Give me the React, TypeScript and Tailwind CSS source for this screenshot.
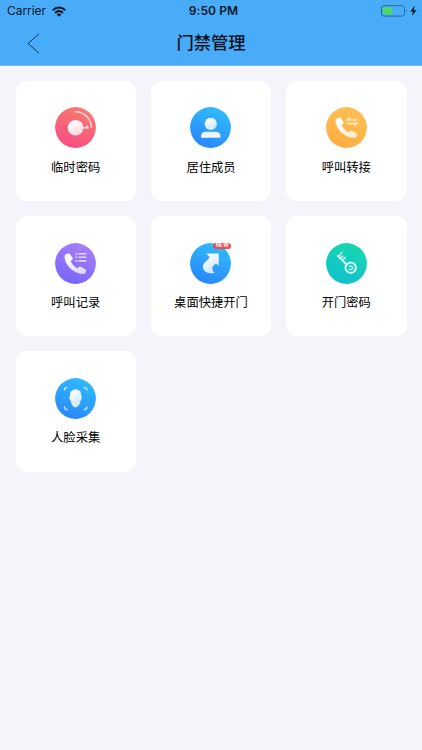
import type { ReactNode } from "react";

type Tile = {
  id: string;
  label: string;
  from: string;
  to: string;
  art: ReactNode;
  badge?: string;
};

const HANDSET =
  "M10.6 11.6 L12.7 10.6 Q14.3 10 15.1 11.3 L17.5 14.7 Q18.3 16.2 17 17.1 L15.6 18.2 Q17.6 22.8 22.3 25.4 L23.7 24.1 Q24.9 23 26.3 23.9 L30.3 26.3 Q31.6 27.2 31 28.5 L30.2 30 Q29.5 31.1 28 31 C18.2 30.4 10 22.5 9.5 13.8 Q9.4 12.2 10.6 11.6 Z";

const tiles: Tile[] = [
  {
    id: "temp",
    label: "临时密码",
    from: "#f94d83",
    to: "#f87b6f",
    art: (
      <>
        <circle cx="20.6" cy="20.7" r="7.8" fill="url(#temp-fade)" />
        <path d="M27.5 20.7 H34 M31.9 20.7 V18.5" stroke="#ffe3e6" strokeWidth="1.5" fill="none" />
        <path d="M20.3 4.7 A16 16 0 0 1 36.4 20.3" stroke="#ffd3d6" strokeWidth="1.6" fill="none" strokeLinecap="round" />
      </>
    ),
  },
  {
    id: "member",
    label: "居住成员",
    from: "#2a86fb",
    to: "#2fbdfd",
    art: (
      <>
        <circle cx="20.8" cy="16.9" r="6.1" fill="url(#member-fade)" />
        <path d="M11 29.7 Q11 24.7 16 24.7 H25.6 Q30.6 24.7 30.6 29.7 Q30.6 30.8 29.5 30.8 H12.1 Q11 30.8 11 29.7 Z" fill="#e9f5ff" />
      </>
    ),
  },
  {
    id: "transfer",
    label: "呼叫转接",
    from: "#ffad40",
    to: "#ffc057",
    art: (
      <>
        <path d={HANDSET} fill="url(#transfer-fade)" />
        <path d="M31.3 12.9 H21.2 L24 10.7 M20.7 16.5 H30.8 L28 18.7" stroke="#fff3dc" strokeWidth="1.4" fill="none" />
      </>
    ),
  },
  {
    id: "record",
    label: "呼叫记录",
    from: "#7765fb",
    to: "#a87ff8",
    art: (
      <>
        <path d={HANDSET} fill="url(#record-fade)" />
        <path d="M20.4 10.8 H22.4 M23.6 10.8 H31.3 M20.4 14.3 H22.4 M23.6 14.3 H31.3 M20.4 17.9 H22.4 M23.6 17.9 H31.3" stroke="#e2daff" strokeWidth="1.6" />
      </>
    ),
  },
  {
    id: "shortcut",
    label: "桌面快捷开门",
    from: "#2a86fb",
    to: "#2fbdfd",
    badge: "NEW",
    art: (
      <path d="M16.2 10.5 H28.8 V23 L26.2 20.5 C22 22.4 20.7 26.5 24.8 30 C18 31.4 12.9 28.2 13 23.5 C13.1 19.5 16.7 18.7 19.7 14.2 Z" fill="url(#shortcut-fade)" />
    ),
  },
  {
    id: "password",
    label: "开门密码",
    from: "#13bfcf",
    to: "#14d9ae",
    art: (
      <g stroke="#d5fff8" fill="none">
        <path d="M11.3 12.4 L20.4 21.2" strokeWidth="1.9" />
        <path d="M12.8 13.4 L16.2 9 M14.7 15.3 L17.2 12.8 M16.7 17.3 L19.8 14.1" strokeWidth="1.5" />
        <circle cx="24.7" cy="24.7" r="5.2" strokeWidth="2.1" />
        <path d="M22.6 23.1 H24.9 A1.7 1.7 0 0 1 24.9 26.5 H23" strokeWidth="1.3" />
      </g>
    ),
  },
  {
    id: "face",
    label: "人脸采集",
    from: "#2a86fb",
    to: "#2fbdfd",
    art: (
      <>
        <path d="M20.6 11.5 C24.5 11.5 26.5 14 26.3 18.2 C27.3 18.8 26.9 21.7 25.7 22 C25.2 26 23.4 29.4 20.6 29.4 C17.8 29.4 16 26 15.5 22 C14.3 21.7 13.9 18.8 14.9 18.2 C14.7 14 16.7 11.5 20.6 11.5 Z" fill="url(#face-fade)" />
        <path d="M9.6 12.6 V11 Q9.6 9.6 11 9.6 H12.6 M28.7 9.6 H30.3 Q31.7 9.6 31.7 11 V12.6 M31.7 28.5 V30.1 Q31.7 31.5 30.3 31.5 H28.7 M12.6 31.5 H11 Q9.6 31.5 9.6 30.1 V28.5" stroke="#c8ebff" strokeWidth="1.4" fill="none" />
      </>
    ),
  },
];

function TileIcon({ tile }: { tile: Tile }) {
  return (
    <svg className="block size-[41px]" viewBox="0 0 41 41">
      <defs>
        <linearGradient id={`${tile.id}-bg`} x1="0.3" y1="1" x2="0.7" y2="0">
          <stop offset="0" stopColor={tile.from} />
          <stop offset="1" stopColor={tile.to} />
        </linearGradient>
        <linearGradient id={`${tile.id}-fade`} x1="0.2" y1="0" x2="0.8" y2="1">
          <stop offset="0.2" stopColor="#fff" stopOpacity="0.96" />
          <stop offset="1" stopColor="#fff" stopOpacity="0.72" />
        </linearGradient>
      </defs>
      <circle cx="20.5" cy="20.5" r="20.4" fill={`url(#${tile.id}-bg)`} />
      {tile.art}
    </svg>
  );
}

function StatusBar() {
  return (
    <div className="grid h-[22px] grid-cols-3 items-center pl-[7px] pr-[5px] text-[#07192a]">
      <div className="flex items-center gap-[6px]">
        <span className="text-[12px] leading-none tracking-[-0.05px]">Carrier</span>
        <svg className="h-[11px] w-[14px]" viewBox="0 0 14 11" fill="none" stroke="#051320" strokeWidth="2.1">
          <path d="M0.7 4.3 Q7 -1.3 13.3 4.3" />
          <path d="M3.1 6.9 Q7 3.4 10.9 6.9" />
          <path d="M7 10.7 L4.7 8.4 Q7 6.7 9.3 8.4 Z" fill="#051320" stroke="none" />
        </svg>
      </div>
      <span className="pl-[3px] text-center text-[12px] font-semibold leading-none tracking-[0.1px]">9:50 PM</span>
      <div className="flex items-center justify-end">
        <svg className="h-[12px] w-[36px]" viewBox="0 0 36 12">
          <rect x="0.5" y="0.7" width="23" height="10.4" rx="2.6" fill="none" stroke="#256a9f" />
          <rect x="2" y="2.2" width="9" height="7.4" rx="1" fill="#4cd964" />
          <path d="M25 4 Q26.7 5.9 25 7.9 Z" fill="#256a9f" />
          <path d="M33.6 0.8 L29.4 6.6 H32 L31.1 11 L35.4 5.2 H32.8 Z" fill="#051320" />
        </svg>
      </div>
    </div>
  );
}

export default function App() {
  return (
    <div className="min-h-[750px] w-full bg-[#f5f4fb] font-['Inter','Noto_Sans_CJK_SC',sans-serif]">
      <header className="h-[66px] border-b border-[#74b5ea] bg-[#49acf9]">
        <StatusBar />
        <div className="grid h-[42px] grid-cols-[60px_1fr_60px] items-center">
          <button className="flex pl-[27px]" aria-label="返回">
            <svg className="h-[21px] w-[13px]" viewBox="0 0 13 21" fill="none" stroke="#16364f">
              <path d="M12 0.9 L1 10.5 L12 20.1" />
            </svg>
          </button>
          <h1 className="text-center text-[17.3px] font-medium leading-none text-[#07121d]">门禁管理</h1>
        </div>
      </header>

      <main className="grid grid-cols-3 gap-[15px] px-[15.5px] pt-[14.7px]">
        {tiles.map((tile) => (
          <div key={tile.id} className="flex h-[120.4px] flex-col items-center rounded-[11px] bg-white pt-[26.5px]">
            <div className="relative">
              <TileIcon tile={tile} />
              {tile.badge && (
                <span className="absolute left-[22.5px] top-0 flex h-[6.5px] w-[18.5px] items-center justify-center rounded-[3px] bg-[#f04a50] text-[5.5px] font-semibold leading-none text-white">
                  {tile.badge}
                </span>
              )}
            </div>
            <span className="mt-[12.4px] text-[12.3px] leading-[14px] text-black">{tile.label}</span>
          </div>
        ))}
      </main>
    </div>
  );
}
